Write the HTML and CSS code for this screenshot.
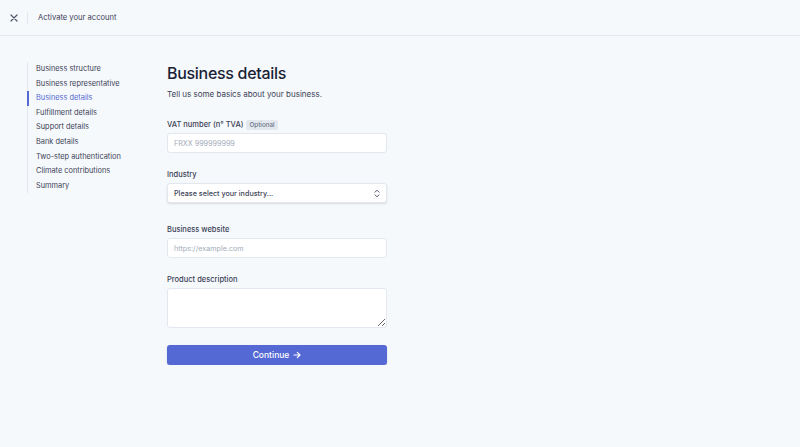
FILE: index.html
```html
<!DOCTYPE html>
<html lang="en">
<head>
  <meta charset="UTF-8" />
  <title>Activate your account</title>
  <link rel="stylesheet" href="styles.css">
</head>
<body>
  <header class="topbar">
    <button class="close" aria-label="Close">
      <svg width="8" height="8" viewBox="0 0 8 8"><path d="M1 1l6 6M7 1L1 7" stroke="#4f566b" stroke-width="1.2" stroke-linecap="round"/></svg>
    </button>
    <span class="divider"></span>
    <span class="topbar-title">Activate your account</span>
  </header>

  <div class="layout">
    <nav class="steps">
      <a>Business structure</a>
      <a>Business representative</a>
      <a class="active">Business details</a>
      <a>Fulfillment details</a>
      <a>Support details</a>
      <a>Bank details</a>
      <a>Two-step authentication</a>
      <a>Climate contributions</a>
      <a>Summary</a>
    </nav>

    <main class="form">
      <h1>Business details</h1>
      <p class="lead">Tell us some basics about your business.</p>

      <div class="field">
        <label>VAT number (n° TVA) <span class="badge">Optional</span></label>
        <input type="text" placeholder="FRXX 999999999">
      </div>

      <div class="field field-select">
        <label>Industry</label>
        <div class="select">
          <span>Please select your industry...</span>
          <svg width="6" height="9" viewBox="0 0 6 9"><path d="M1 3.2L3 1.2l2 2M1 5.8l2 2 2-2" fill="none" stroke="#4f566b" stroke-width="1" stroke-linecap="round" stroke-linejoin="round"/></svg>
        </div>
      </div>

      <div class="field">
        <label>Business website</label>
        <input type="text" placeholder="https://example.com">
      </div>

      <div class="field">
        <label>Product description</label>
        <textarea></textarea>
      </div>

      <button class="continue">Continue
        <svg width="8" height="8" viewBox="0 0 8 8"><path d="M1 4h6M4.3 1.3L7 4 4.3 6.7" fill="none" stroke="#fff" stroke-width="1.2" stroke-linecap="round" stroke-linejoin="round"/></svg>
      </button>
    </main>
  </div>
</body>
</html>
```

FILE: styles.css
```css
body {
  font-family: Inter, "Noto Sans", sans-serif;
  background: #f6f9fc;
  margin: 0;
  color: #3c4257;
}
.topbar {
  height: 36px;
  display: flex;
  align-items: center;
  padding-left: 9px;
  border-bottom: 1px solid #e3e8ee;
  box-sizing: border-box;
}
.close {
  background: none;
  border: none;
  padding: 0;
  width: 9px;
  height: 9px;
  display: flex;
  align-items: center;
  justify-content: center;
}
.divider {
  width: 1px;
  height: 12px;
  background: #e3e8ee;
  margin: 0 10px 0 9px;
}
.topbar-title {
  font-size: 7.6px;
  color: #3c4257;
}
.layout {
  display: flex;
  padding: 25px 0 0 27px;
}
.steps {
  width: 139px;
  display: flex;
  flex-direction: column;
  border-left: 1px solid #e3e8ee;
  align-self: flex-start;
  margin-top: 1px;
}
.steps a {
  font-size: 7.4px;
  color: #3c4257;
  padding-left: 7px;
  line-height: 14.6px;
  margin-left: -1px;
  border-left: 2px solid transparent;
}
.steps a.active {
  color: #5469d4;
  border-left-color: #5469d4;
}
.form {
  width: 220px;
}
h1 {
  font-size: 16px;
  font-weight: 500;
  color: #1a1f36;
  margin: 0;
  letter-spacing: -0.3px;
  line-height: 24px;
}
.lead {
  font-size: 8px;
  color: #3c4257;
  margin: 3px 0 20px;
  line-height: 12px;
}
.field {
  margin-bottom: 17px;
}
.field-select {
  margin-bottom: 22px;
}
label {
  display: block;
  font-size: 7.5px;
  font-weight: 500;
  line-height: 10px;
  color: #3c4257;
  margin-bottom: 3px;
}
.badge {
  display: inline-block;
  background: #e3e8ee;
  color: #697386;
  font-size: 6.3px;
  line-height: 10px;
  padding: 0 3px;
  border-radius: 2px;
  margin-left: 1px;
}
input, textarea, .select {
  width: 100%;
  height: 20px;
  box-sizing: border-box;
  border: 1px solid #e3e8ee;
  border-radius: 3px;
  background: #fff;
  padding: 0 6px;
  font-family: inherit;
  font-size: 7.2px;
  display: block;
  margin: 0;
}
input::placeholder {
  color: #a3acb9;
}
.select {
  display: flex;
  align-items: center;
  justify-content: space-between;
  color: #3c4257;
  font-weight: 500;
  box-shadow: 0 1px 2px rgba(0,0,0,0.12);
}
textarea {
  height: 40px;
}
.continue {
  width: 220px;
  height: 20px;
  background: #5469d4;
  color: #fff;
  border: none;
  border-radius: 3px;
  font-family: inherit;
  font-size: 8.5px;
  font-weight: 500;
  display: flex;
  align-items: center;
  justify-content: center;
  gap: 4px;
  margin-top: 15px;
  box-shadow: 0 1px 2px rgba(0,0,0,0.15);
}
```
